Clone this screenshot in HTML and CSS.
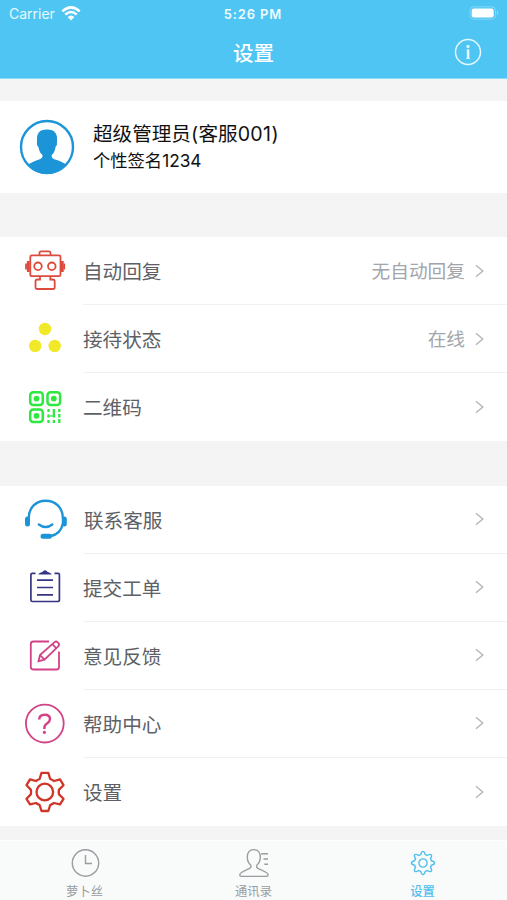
FILE: index.html
```html
<!DOCTYPE html>
<html lang="zh-CN">
<head>
<meta charset="utf-8">
<title>设置</title>
<link rel="stylesheet" href="styles.css">
</head>
<body>
<div class="app">
  <header class="header">
    <div class="status">
      <div class="carrier"><span>Carrier</span>
        <svg width="20" height="15" viewBox="0 0 20 15" fill="none" stroke="#fff" stroke-width="2.5"><path d="M1.3 5.4Q10-2.6 18.7 5.4"/><path d="M4.3 8.6Q10 3.3 15.7 8.6"/><path d="M6.6 11Q10 7.9 13.4 11L10 14.5Z" fill="#fff" stroke="none"/></svg>
      </div>
      <span class="time">5:26 PM</span>
      <svg class="battery" width="31" height="14" viewBox="0 0 31 14"><rect x="1" y=".8" width="25.5" height="12.4" rx="3.8" fill="none" stroke="#84d7f8"/><rect x="2.7" y="2.4" width="22" height="9.2" rx="2.3" fill="#fff"/><path d="M28 4.8Q30 7 28 9.2Z" fill="#a4e2fa"/></svg>
    </div>
    <div class="navbar">
      <h1>设置</h1>
      <svg class="info" width="28" height="28" viewBox="0 0 28 28"><circle cx="14" cy="14" r="12.5" fill="none" stroke="#e6f9ff" stroke-width="1.5"/><circle cx="14" cy="8.4" r="1.6" fill="#e6f9ff"/><path d="M12.6 12H14.1V20.5M12.4 20.5H15.8" fill="none" stroke="#e6f9ff" stroke-width="1.2"/><path d="M14.1 11.5V21" stroke="#e6f9ff" stroke-width="2.5"/></svg>
    </div>
  </header>
  <main>
    <section class="profile">
      <svg width="56" height="56" viewBox="0 0 56 56"><circle cx="28" cy="28" r="26" fill="#fff" stroke="#1c94d8" stroke-width="2.4"/><path d="M9 46Q11 43.5 20 40.5Q24 39 23.5 36Q20 33 19.5 28Q17.5 27 18 22Q17 10.5 27.5 10.5Q39 10 38 22Q38.5 26 36.5 28Q36 33 32.7 36Q32 39 36 40.5Q45 43 47 46Q39 55 28 55Q17 55 9 46Z" fill="#1c94d8"/></svg>
      <div class="who"><div class="name">超级管理员<span class="latin">(</span>客服<span class="latin">001)</span></div><div class="signature">个性签名1234</div></div>
    </section>
    <section class="group">
      <div class="row"><svg class="icon" viewBox="0 0 44 44" fill="none" stroke="#dc4b3e" stroke-width="1.8"><rect x="7.3" y="6.4" width="30.2" height="20.8" rx="1.5"/><path d="M16.5 6V4Q16.5 2.4 18 2.4H26Q27.5 2.4 27.5 4V6M17 27.5V30.5H14.5Q12.5 30.5 12.5 32.5V38.5Q12.5 40 14 40H30Q31.7 40 31.7 38.5V32.5Q31.7 30.5 29.7 30.5H27.3V27.5"/><circle cx="15" cy="17.3" r="3.8"/><circle cx="28.8" cy="17.3" r="3.8"/><path d="M5.3 12V23M39.3 12V23" stroke-width="2.8"/><path d="M3 14.5V20.5M41.2 14.5V20.5"/></svg><div class="cell"><span>自动回复</span><span class="value">无自动回复</span><svg class="arrow" viewBox="0 0 9 14"><path d="M1 1.2L7.7 7L1 12.8"/></svg></div></div>
      <div class="row"><svg class="icon" viewBox="0 0 44 44" fill="#f1e928"><circle cx="22" cy="12" r="6.2"/><circle cx="12.2" cy="29" r="6.2"/><circle cx="31.7" cy="29" r="6.2"/></svg><div class="cell"><span>接待状态</span><span class="value">在线</span><svg class="arrow" viewBox="0 0 9 14"><path d="M1 1.2L7.7 7L1 12.8"/></svg></div></div>
      <div class="row"><svg class="icon" viewBox="0 0 44 44" fill="none" stroke="#2de83f" stroke-width="2.5"><rect x="7.2" y="7.3" width="12.6" height="12.6" rx="3"/><rect x="24.5" y="7.3" width="12.6" height="12.6" rx="3"/><rect x="7.2" y="24.5" width="12.6" height="12.6" rx="3"/><g fill="#2de83f" stroke="none"><circle cx="13.5" cy="13.6" r="2.9"/><circle cx="30.8" cy="13.6" r="2.9"/><circle cx="13.5" cy="30.8" r="2.9"/></g><path d="M25.5 24V27M25.5 29.5V32.5M25.5 35V38M30.9 24V32.5M30.9 35V38M36.3 24V27M36.3 29V32.5M36.3 34V38" stroke-width="2.3"/><path d="M26 31H31" stroke-width="1.2"/></svg><div class="cell"><span>二维码</span><svg class="arrow" viewBox="0 0 9 14"><path d="M1 1.2L7.7 7L1 12.8"/></svg></div></div>
    </section>
    <section class="group">
      <div class="row"><svg class="icon" viewBox="0 0 44 44" fill="none" stroke="#1c94d8" stroke-width="2.4" stroke-linecap="round"><path d="M5.8 20C5.8 9.5 13.2 2.8 22.7 2.8S39.8 9.5 39.8 20M39.8 26Q37.5 36 28 38"/><path d="M15.8 26.5Q22.7 31.5 29.3 26.5"/><path d="M4.5 21V26M41.3 21V26M20 38.3H26.5" stroke-width="5"/></svg><div class="cell"><span class="nudge">联系客服</span><svg class="arrow" viewBox="0 0 9 14"><path d="M1 1.2L7.7 7L1 12.8"/></svg></div></div>
      <div class="row"><svg class="icon" viewBox="0 0 44 44" fill="none" stroke="#353583" stroke-width="1.7"><path d="M12.5 7.4H9.2Q7.9 7.4 7.9 8.8V34Q7.9 35.5 9.4 35.5H34.5Q36.4 35.5 36.4 34V8.8Q36.4 7.4 35 7.4H31.5M14 14.2H30M14 21.5H30M14 28.8H30"/><path d="M15.2 8.4Q16 6.6 19.3 6Q22 2.5 24.7 6Q28 6.6 28.8 8.4Z" fill="#353583" stroke="none"/></svg><div class="cell"><span>提交工单</span><svg class="arrow" viewBox="0 0 9 14"><path d="M1 1.2L7.7 7L1 12.8"/></svg></div></div>
      <div class="row"><svg class="icon" viewBox="0 0 44 44" fill="none" stroke="#d34186" stroke-width="1.8"><path d="M26 7.5H10.5Q7.8 7.5 7.8 10V33Q7.8 35.5 10.5 35.5H33.5Q36 35.5 36 33V17.5"/><path d="M15.5 27.2L17 21L31.6 8.1Q33.2 6.9 34.7 8.3L35.4 9.1Q36.8 10.7 35.2 12.3L21.5 25.7ZM17 21L21.5 25.7M29.3 10.2L33.5 14.3"/></svg><div class="cell"><span>意见反馈</span><svg class="arrow" viewBox="0 0 9 14"><path d="M1 1.2L7.7 7L1 12.8"/></svg></div></div>
      <div class="row"><svg class="icon" viewBox="0 0 44 44" fill="none" stroke="#d34186" stroke-width="1.8"><circle cx="21.8" cy="21.6" r="18.9"/><path d="M16.2 17.5Q16.2 12.7 21.7 12.7Q27 12.7 27 17Q27 19.4 24.3 21.3Q21.4 23.2 21.4 25.7V27" stroke-width="2.4"/><circle cx="21.4" cy="30.3" r="1.6" fill="#d34186" stroke="none"/></svg><div class="cell"><span>帮助中心</span><svg class="arrow" viewBox="0 0 9 14"><path d="M1 1.2L7.7 7L1 12.8"/></svg></div></div>
      <div class="row"><svg class="icon" viewBox="0 0 44 44" fill="none" stroke="#d13528" stroke-width="2.3" stroke-linejoin="round"><path d="M18.5 2.9H25.3L27.2 9Q29 9.8 31 11L37 9.3L40.5 15.2L36 19.6Q35.4 22 36 24.4L40.5 28.8L37 34.3L31 33Q29 34.2 27.2 35L25.3 41H18.5L16.6 35Q14.8 34.2 13 33L7 34.3L3.5 28.8L7.8 24.4Q8.4 22 7.8 19.6L3.5 15.2L7 9.3L13 11Q14.8 9.8 16.6 9Z"/><circle cx="21.8" cy="22" r="8.3"/></svg><div class="cell"><span>设置</span><svg class="arrow" viewBox="0 0 9 14"><path d="M1 1.2L7.7 7L1 12.8"/></svg></div></div>
    </section>
  </main>
  <nav class="tabs">
    <div class="tab"><svg width="30" height="30" viewBox="0 0 30 30"><circle cx="15.5" cy="15" r="13.2"/><path d="M15.5 7V15.5H22"/></svg><span>萝卜丝</span></div>
    <div class="tab"><svg width="30" height="30" viewBox="0 0 30 30"><path d="M14.8 1.6C10.5 1.6 8.3 4.7 8.3 9C8.3 12.7 9.6 15.3 11.6 17Q12.8 19.5 10.2 20.6Q.8 24.5.8 26.5V27Q.8 28.4 2.3 28.4H27.5Q29 28.4 29 27V26.5Q29 24.5 19.3 20.6Q16.8 19.5 18 17C20 15.3 21.3 12.7 21.3 9C21.3 4.7 19 1.6 14.8 1.6ZM22.2 5.7H29M24.5 11H29M25.3 16.3H29"/></svg><span>通讯录</span></div>
    <div class="tab active"><svg width="30" height="30" viewBox="0 0 30 30"><g transform="translate(15 15)"><path d="M-2.2-8.4Q-1.5-11.6 0-11.6T2.2-8.4L4.4-7.5Q7.2-9.3 8.2-8.2T7.5-4.4L8.4-2.2Q11.6-1.5 11.6 0T8.4 2.2L7.5 4.4Q9.3 7.2 8.2 8.2T4.4 7.5L2.2 8.4Q1.5 11.6 0 11.6T-2.2 8.4L-4.4 7.5Q-7.2 9.3-8.2 8.2T-7.5 4.4L-8.4 2.2Q-11.6 1.5-11.6 0T-8.4-2.2L-7.5-4.4Q-9.3-7.2-8.2-8.2T-4.4-7.5Z"/><circle r="4.1"/></g></svg><span>设置</span></div>
  </nav>
</div>
</body>
</html>
```
FILE: styles.css
```css
* { box-sizing: border-box; }
body { margin: 0; background: #f4f4f4; font-family: Inter, "Noto Sans CJK SC", sans-serif; }
svg { display: block; flex: none; }
.app { width: 507px; height: 900px; display: flex; flex-direction: column; }
.header { height: 79px; flex: none; background: #4fc5f4; color: #fff; border-bottom: 1px solid #8bdcf8; }
.status { height: 28px; padding: 0 7px 0 9px; display: grid; grid-template-columns: 1fr auto 1fr; align-items: center; font-size: 14px; line-height: 28px; }
.carrier { display: flex; align-items: center; gap: 6px; color: #e6f9ff; }
.carrier svg { margin-top: -2px; }
.time { font-weight: 600; font-size: 13px; letter-spacing: .85px; color: #f0fbff; margin-left: -3px; }
.battery { justify-self: end; margin-top: -2px; }
.navbar { height: 50px; display: grid; grid-template-columns: 1fr auto 1fr; align-items: center; padding: 0 25px; }
h1 { grid-column: 2; margin: 0; padding-top: 2px; font-size: 20.5px; line-height: 30px; font-weight: 500; }
.info { justify-self: end; margin-top: -2px; }
main { flex: 1; }
.profile { height: 92px; margin-top: 22px; background: #fff; padding-left: 19px; display: flex; align-items: center; gap: 18px; }
.profile svg { margin-top: -1px; }
.who { color: #111; margin-top: -1px; }
.name { font-size: 19.6px; line-height: 28px; }
.latin { letter-spacing: .35px; }
.signature { font-size: 17.3px; line-height: 26px; }
.group { margin-top: 44px; background: #fff; }
.group + .group { margin-top: 44.5px; }
.row { height: 68px; padding-left: 23px; display: flex; align-items: center; }
.group + .group .row:nth-child(n+2) { height: 68.1px; }
.icon { width: 44px; height: 44px; }
.cell { flex: 1; height: 100%; margin-left: 16px; padding-right: 23px; display: flex; align-items: center; border-bottom: 1px solid #f1f1f1; color: #5d6166; font-size: 19.6px; line-height: 28px; }
.cell span { padding-top: 2px; }
.group + .group .cell span { padding-top: 3px; }
.row:last-child .cell { border-bottom: 0; }
.nudge { padding-left: 1px; }
.value { margin-left: auto; color: #a2a6ab; font-size: 18.7px; }
.arrow { width: 9px; height: 14px; margin-left: auto; fill: none; stroke: #b5b8bc; stroke-width: 1.5; }
.value + .arrow { margin-left: 10px; }
.tabs { height: 60px; flex: none; display: grid; grid-template-columns: repeat(3, 1fr); background: #f9fafa; border-top: 1px solid #fff; }
.tab { padding-top: 7px; display: flex; flex-direction: column; align-items: center; color: #999da0; font-size: 12.3px; line-height: 18px; }
.tab span { margin-top: 5px; }
.tab svg { fill: none; stroke: currentColor; stroke-width: 1.4; }
.active { color: #4fc0eb; font-weight: 500; }
```
